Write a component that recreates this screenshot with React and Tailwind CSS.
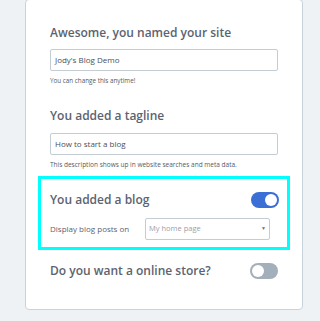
export default function App() {
  return (
    <div className="w-[320px] h-[321px] bg-[#eef2f5] overflow-hidden" style={{ fontFamily: '"Open Sans", sans-serif' }}>
      <div className="ml-[25px] w-[278px] h-[311px] -mt-[1px] bg-white border border-[#c9d3dc] rounded-[4px] pt-[24px] px-[24px]">
        {/* site name */}
        <h2 className="text-[12px] leading-[18px] font-semibold text-[#5c6370]">Awesome, you named your site</h2>
        <div className="mt-[7px] h-[22px] border border-[#c4ccd4] rounded-[2px] px-[4px] flex items-center text-[8px] text-[#4a4f57]">
          Jody's Blog Demo
        </div>
        <p className="mt-[6px] text-[6.3px] leading-[8px] text-[#555b63]">You can change this anytime!</p>

        {/* tagline */}
        <h2 className="mt-[22px] text-[12px] leading-[18px] font-semibold text-[#5c6370]">You added a tagline</h2>
        <div className="mt-[8px] h-[22px] border border-[#c4ccd4] rounded-[2px] px-[4px] flex items-center text-[8px] text-[#4a4f57]">
          How to start a blog
        </div>
        <p className="mt-[6px] text-[6.5px] leading-[8px] text-[#555b63]">This description shows up in website searches and meta data.</p>

        {/* blog */}
        <div className="mt-[7px] -mx-[12px] border-[3px] border-[#00ffff] pl-[9px] pr-[8px] pt-[12px] pb-[7px]">
          <div className="flex items-center justify-between">
            <h2 className="text-[12px] leading-[18px] font-semibold text-[#5c6370]">You added a blog</h2>
            <div className="w-[28px] h-[16px] rounded-full bg-[#3a6fd6] p-[2px] flex justify-end">
              <div className="w-[12px] h-[12px] rounded-full bg-white" />
            </div>
          </div>
          <div className="mt-[9px] flex items-center">
            <span className="w-[95px] text-[8px] text-[#5c6370]">Display blog posts on</span>
            <div className="w-[125px] h-[22px] border border-[#c4ccd4] rounded-[2px] px-[3px] flex items-center justify-between text-[7.5px] text-[#9aa1a8]">
              <span>My home page</span>
              <span className="text-[5px] text-[#6b7178]">▼</span>
            </div>
          </div>
        </div>

        {/* store */}
        <div className="mt-[12px] flex items-center justify-between">
          <h2 className="text-[12px] leading-[18px] font-semibold text-[#5c6370]">Do you want a online store?</h2>
          <div className="w-[28px] h-[16px] rounded-full bg-[#a3afba] p-[2px] flex justify-start">
            <div className="w-[12px] h-[12px] rounded-full bg-white" />
          </div>
        </div>
      </div>
    </div>
  );
}
